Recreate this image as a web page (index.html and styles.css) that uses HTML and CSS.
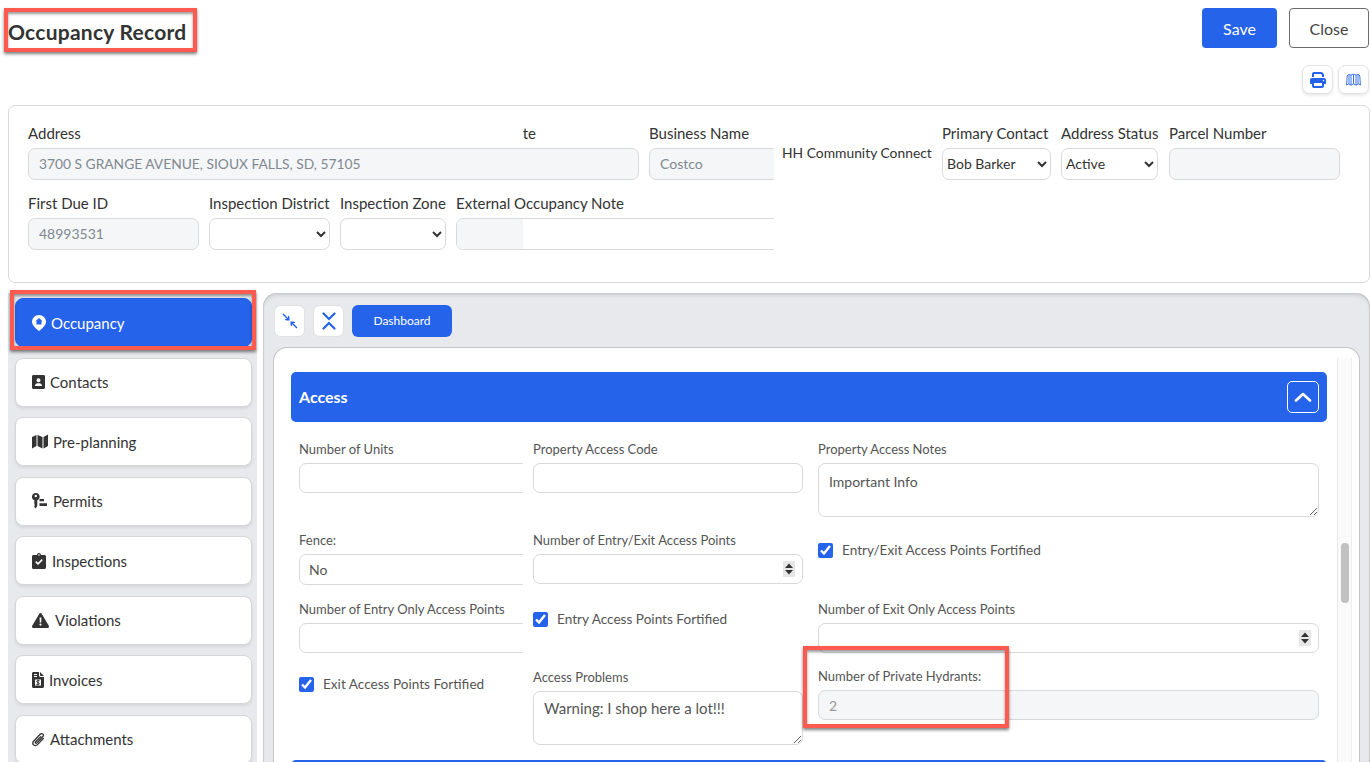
FILE: index.html
```html
<!DOCTYPE html>
<html lang="en">
<head>
  <meta charset="UTF-8">
  <meta name="viewport" content="width=device-width, initial-scale=1.0">
  <title>Occupancy Record</title>
  <link rel="stylesheet" href="styles.css">
</head>
<body>
  <header class="page-header">
    <h1>Occupancy Record</h1>
    <div class="header-actions">
      <button class="btn btn-save">Save</button>
      <button class="btn btn-close">Close</button>
    </div>
  </header>

  <div class="tool-row">
    <button class="tool-button" aria-label="Print">
      <svg width="16" height="16" viewBox="0 0 512 512" fill="#2563eb"><path d="M128 0C93 0 64 29 64 64v96h64V64h227l29 29v67h64V93c0-17-7-33-19-45L403 19C391 7 375 0 358 0H128zM384 352v96H128v-96h256zm64 32h32c18 0 32-14 32-32v-96c0-35-29-64-64-64H64c-35 0-64 29-64 64v96c0 18 14 32 32 32h32v64c0 35 29 64 64 64h256c35 0 64-29 64-64v-64zM432 248a24 24 0 1 1 0 48 24 24 0 1 1 0-48z"/></svg>
    </button>
    <button class="tool-button" aria-label="Map">
      <svg width="15" height="13" viewBox="0 0 15 13" fill="none" stroke="#2563eb" stroke-width=".9" stroke-linejoin="round"><path d="M.6 12 1.200 3C1.600 1.500 3.500.9 5 2.200 6.500.9 8.500.9 10 2.200 11.500.9 13.400 1.500 13.800 3L14.400 12 12.500 10.800 10 12.200 7.500 10.800 5 12.200 2.500 10.800z"/><path d="M5 2.200V12.200M10 2.200V12.200M3 2V10.800M7.500 1.500V10.800M12 2V10.800"/></svg>
    </button>
  </div>

  <section class="summary-card">
    <div class="summary-row">
      <div class="field field-address">
        <div class="label-row"><label>Address</label><label class="label-stub">te</label></div>
        <input type="text" value="3700 S GRANGE AVENUE, SIOUX FALLS, SD, 57105" disabled>
      </div>
      <div class="field field-business">
        <label>Business Name</label>
        <input type="text" value="Costco" disabled>
      </div>
      <div class="community">HH Community Connect</div>
      <div class="field field-contact">
        <label>Primary Contact</label>
        <select><option>Bob Barker</option></select>
      </div>
      <div class="field field-status">
        <label>Address Status</label>
        <select><option>Active</option></select>
      </div>
      <div class="field field-parcel">
        <label>Parcel Number</label>
        <input type="text" disabled>
      </div>
    </div>
    <div class="summary-row">
      <div class="field field-due">
        <label>First Due ID</label>
        <input type="text" value="48993531" disabled>
      </div>
      <div class="field field-district">
        <label>Inspection District</label>
        <select><option></option></select>
      </div>
      <div class="field field-zone">
        <label>Inspection Zone</label>
        <select><option></option></select>
      </div>
      <div class="field field-note">
        <label>External Occupancy Note</label>
        <div class="note-box"><span class="note-disabled"></span></div>
      </div>
    </div>
  </section>

  <div class="workspace">
    <nav class="side-nav">
      <a class="nav-item active">
        <svg class="nav-icon" width="14" height="16" viewBox="0 0 14 16"><path fill="#fff" d="M7 0C3.100 0 0 3 0 6.800 0 10.500 4.500 14.300 7 16c2.500-1.700 7-5.500 7-9.200C14 3 10.900 0 7 0z"/><path fill="#2563eb" d="M7 3 3.500 6.300h1V9.500h5V6.300h1z"/></svg>
        <span>Occupancy</span>
      </a>
      <a class="nav-item">
        <svg class="nav-icon" width="13" height="14" viewBox="0 0 13 14"><path fill="#333" fill-rule="evenodd" d="M1.500 0h10C12.300 0 13 .7 13 1.500v11c0 .8-.7 1.500-1.500 1.500h-10C.7 14 0 13.300 0 12.500v-11C0 .7.700 0 1.500 0zM6.500 3.200a2 2 0 1 0 0 4 2 2 0 0 0 0-4zM3 11h7c0-1.700-1.200-2.800-2.500-2.800h-2C4.200 8.200 3 9.300 3 11z"/></svg>
        <span>Contacts</span>
      </a>
      <a class="nav-item">
        <svg class="nav-icon" width="16" height="15" viewBox="0 0 16 15"><path fill="#333" d="M0 3 4.500 1v11L0 14.500zM5.500 1l5 2v11.500l-5-2.500zM11.500 3 16 .5V12l-4.500 2.500z"/></svg>
        <span>Pre-planning</span>
      </a>
      <a class="nav-item nav-item-loose">
        <svg class="nav-icon" width="15" height="16" viewBox="0 0 15 16"><path fill="#333" fill-rule="evenodd" d="M3.800 0a3.800 3.800 0 0 1 1.500 7.300V12.500L3.800 15.500 2.300 14v-1.200l.8-.8-.8-.8V7.300A3.800 3.800 0 0 1 3.800 0zm0 1.800a1.200 1.200 0 1 0 0 2.400 1.200 1.200 0 0 0 0-2.400zM7.500 6h4.500v2.300H7.500zM7.500 10.300H15v2.700H7.500z"/></svg>
        <span>Permits</span>
      </a>
      <a class="nav-item nav-item-loose">
        <svg class="nav-icon" width="14" height="16" viewBox="0 0 14 16"><path fill="#333" fill-rule="evenodd" d="M5 2a2 2 0 0 1 4 0h3.500C13.300 2 14 2.700 14 3.500v11c0 .8-.7 1.500-1.500 1.500h-11C.7 16 0 15.300 0 14.500v-11C0 2.700.7 2 1.500 2zM7 1.200a.8.8 0 1 0 0 1.600.8.8 0 0 0 0-1.600zM10.800 7.200 9.700 6.100 6 9.800 4.300 8.100 3.200 9.200 6 12z"/></svg>
        <span>Inspections</span>
      </a>
      <a class="nav-item nav-item-loose">
        <svg class="nav-icon" width="17" height="15" viewBox="0 0 17 15"><path fill="#333" fill-rule="evenodd" d="M8.500 0c.5 0 .9.300 1.200.7l7.100 12c.5.900-.1 2.300-1.200 2.300H1.400C.3 15-.3 13.600.2 12.700l7.100-12C7.600.3 8 0 8.500 0zM7.600 4.500l.2 5h1.400l.2-5zM8.500 10.500a1.100 1.100 0 1 0 0 2.200 1.100 1.100 0 0 0 0-2.200z"/></svg>
        <span>Violations</span>
      </a>
      <a class="nav-item">
        <svg class="nav-icon" width="12" height="16" viewBox="0 0 12 16"><path fill="#333" d="M8 0l4 4H9a1 1 0 0 1-1-1z"/><path fill="#333" fill-rule="evenodd" d="M1.500 0H7v3.500C7 4.300 7.700 5 8.500 5H12v9.500c0 .8-.7 1.500-1.500 1.500h-9C.7 16 0 15.300 0 14.500v-13C0 .7.700 0 1.500 0zM2 2v1h3V2zM2 4v1h3V4zM3 7.500v6h6v-6z"/><path fill="none" stroke="#333" stroke-width="1" d="M7.500 8.700C7 8.300 4.600 8.300 4.600 9.500s2.800.9 2.800 2.100-2.400 1.200-3 .7M6 7.800v5.400"/></svg>
        <span>Invoices</span>
      </a>
      <a class="nav-item">
        <svg class="nav-icon" width="13" height="15" viewBox="0 0 13 15" fill="none" stroke="#333" stroke-width="1.300" stroke-linecap="round"><path d="M11.300 6.500 5.500 12.600c-1.100 1.200-2.900 1.300-3.900.3-1-1-.9-2.700.2-3.900L8.200 2.300c.8-.8 2-.9 2.700-.2.700.7.6 1.900-.2 2.700L4.900 10.900c-.4.400-1 .5-1.300.2-.3-.3-.3-.9.100-1.300L8.800 4.600"/></svg>
        <span>Attachments</span>
      </a>
    </nav>

    <main class="main-panel">
      <div class="panel-toolbar">
        <button class="square-button" aria-label="Collapse">
          <svg width="16" height="16" viewBox="0 0 16 16" fill="#2563eb"><path d="M1.500.5 6 5V2.500L7.500 4v3.500H4L2.500 6H5L.5 1.500zM14.500 15.500 10 11v2.500L8.500 12V8.500H12L13.500 10H11l4.500 4.500z"/></svg>
        </button>
        <button class="square-button" aria-label="Collapse all">
          <svg width="14" height="18" viewBox="0 0 14 18" fill="none" stroke="#2563eb" stroke-width="2.200" stroke-linecap="round"><path d="M1.500 1.500 7 7l5.500-5.500M1.500 16.500 7 11l5.500 5.500"/></svg>
        </button>
        <button class="btn-dashboard">Dashboard</button>
      </div>

      <div class="form-card">
        <div class="section-bar">
          <span>Access</span>
          <button class="section-toggle" aria-label="Collapse section">
            <svg width="18" height="10" viewBox="0 0 18 10" fill="none" stroke="#fff" stroke-width="2.600" stroke-linecap="round" stroke-linejoin="round"><path d="M2 8.500 9 2l7 6.500"/></svg>
          </button>
        </div>

        <div class="form-grid">
          <div class="form-field clipped">
            <label>Number of Units</label>
            <input type="text">
          </div>
          <div class="form-field">
            <label>Property Access Code</label>
            <input type="text">
          </div>
          <div class="form-field">
            <label>Property Access Notes</label>
            <textarea class="notes-area">Important Info</textarea>
          </div>

          <div class="form-field clipped">
            <label>Fence:</label>
            <input class="tall" type="text" value="No">
          </div>
          <div class="form-field">
            <label>Number of Entry/Exit Access Points</label>
            <input type="number">
          </div>
          <label class="check-field"><input type="checkbox" checked> Entry/Exit Access Points Fortified</label>

          <div class="form-field clipped">
            <label>Number of Entry Only Access Points</label>
            <input type="text">
          </div>
          <label class="check-field"><input type="checkbox" checked> Entry Access Points Fortified</label>
          <div class="form-field">
            <label>Number of Exit Only Access Points</label>
            <input type="number">
          </div>

          <label class="check-field check-low"><input type="checkbox" checked> Exit Access Points Fortified</label>
          <div class="form-field">
            <label>Access Problems</label>
            <textarea class="notes-area notes-large">Warning: I shop here a lot!!!</textarea>
          </div>
          <div class="form-field hydrants">
            <label>Number of Private Hydrants:</label>
            <input type="text" value="2" disabled>
          </div>
        </div>

        <div class="section-bar next-bar"></div>
        <div class="scroll-track"><div class="scroll-thumb"></div></div>
      </div>
    </main>
  </div>

  <!-- red callouts -->
  <div class="callout callout-title"></div>
  <div class="callout callout-nav"></div>
  <div class="callout callout-hydrants"></div>
</body>
</html>
```

FILE: styles.css
```css
* {
  box-sizing: border-box;
}

html,
body {
  height: 762px;
  overflow: hidden;
}

body {
  position: relative;
  font-family: Lato, "Open Sans", Arial, sans-serif;
  margin: 0;
  padding: 0 1px 0 8px;
  background: #fff;
  color: #333;
}

button {
  font-family: inherit;
  cursor: pointer;
}

.page-header {
  display: flex;
  justify-content: space-between;
  align-items: center;
  padding-top: 8px;
  height: 48px;
}

.page-header h1 {
  margin: 6px 0 0;
  font-size: 21px;
  letter-spacing: 0.25px;
  font-weight: 700;
  color: #333;
}

.header-actions {
  display: flex;
  gap: 12px;
  margin-right: 1px;
}

.btn {
  height: 40px;
  font-size: 16px;
  border-radius: 4px;
}

.btn-save {
  width: 75px;
  background: #2563eb;
  border: none;
  color: #fff;
}

.btn-close {
  width: 80px;
  background: #fff;
  border: 1px solid #6b6b6b;
  color: #444;
}

.tool-row {
  display: flex;
  justify-content: flex-end;
  gap: 5px;
  margin-top: 17px;
  margin-right: 1px;
}

.tool-button {
  display: flex;
  align-items: center;
  justify-content: center;
  width: 31px;
  height: 29px;
  padding: 0;
  background: #fff;
  border: 1px solid #e2e2e2;
  border-radius: 7px;
  box-shadow: 0 2px 3px rgba(0, 0, 0, 0.08);
}

.summary-card {
  height: 178px;
  margin-top: 11px;
  padding: 18px 19px 0;
  border: 1px solid #d9d9d9;
  border-radius: 7px;
}

.summary-row {
  display: flex;
  gap: 10px;
  height: 70px;
}

.field {
  display: flex;
  flex-direction: column;
  flex: none;
}

.field label {
  display: block;
  font-size: 15px;
  line-height: 18px;
  margin-bottom: 6px;
  white-space: nowrap;
}

.label-row {
  display: flex;
  justify-content: space-between;
  padding-right: 103px;
}

.field input,
.field select {
  height: 32px;
  padding: 0 10px 2px;
  font-family: inherit;
  font-size: 14px;
  background: #fff;
  color: #333;
  border: 1px solid #d9d9d9;
  border-radius: 7px;
}

.field select {
  padding: 0 0 2px;
}

.field input:disabled {
  background: #f5f6f8;
  color: #808890;
}

.field-address { width: 611px; }
.field-address input { font-size: 13.800px; }
.field-business { width: 125px; overflow: hidden; }
.field-business input { width: 150px; }
.field-contact { width: 109px; }
.field-status { width: 97px; }
.field-parcel { width: 171px; margin-left: 1px; }
.field-due { width: 171px; }
.field-district { width: 121px; }
.field-zone { width: 106px; }
.field-note { width: 318px; overflow: hidden; }

.community {
  flex: none;
  width: 150px;
  margin-left: -2px;
  padding-top: 21px;
  font-size: 13.850px;
  line-height: 15px;
  white-space: nowrap;
}

.note-box {
  width: 340px;
  height: 32px;
  background: #fff;
  border: 1px solid #d9d9d9;
  border-radius: 7px;
  overflow: hidden;
}

.note-disabled {
  display: block;
  width: 66px;
  height: 100%;
  background: #f5f6f8;
}

.workspace {
  display: flex;
  gap: 6px;
  height: 469px;
  margin-top: 10px;
}

.side-nav {
  display: flex;
  flex-direction: column;
  gap: 10.500px;
  flex: none;
  width: 249px;
  padding: 5px 5px 0 7px;
  background: #e8e9ed;
  overflow: hidden;
}

.nav-item {
  display: flex;
  align-items: center;
  flex: none;
  gap: 5px;
  height: 49px;
  padding-left: 16px;
  background: #fff;
  border: 1px solid #d6d6d8;
  border-radius: 8px;
  box-shadow: 0 2px 3px rgba(0, 0, 0, 0.08);
  font-size: 15px;
  color: #333;
}

.nav-item-loose {
  gap: 6px;
}

.nav-item.active {
  background: #2563eb;
  border-color: #2563eb;
  color: #fff;
}

.nav-icon {
  flex: none;
}

.main-panel {
  flex: 1;
  min-width: 0;
  padding: 12px 10px 0;
  background: #e8e9ed;
  border-radius: 14px 14px 0 0;
  box-shadow: inset 0 4px 4px -2px rgba(0, 0, 0, 0.14), inset 1px 0 1px rgba(0, 0, 0, 0.12), inset -1px 0 1px rgba(0, 0, 0, 0.12);
}

.panel-toolbar {
  display: flex;
  align-items: center;
  gap: 8px;
  height: 32px;
  padding-left: 1px;
}

.square-button {
  display: flex;
  align-items: center;
  justify-content: center;
  width: 31px;
  height: 32px;
  padding: 0;
  background: #fff;
  border: 1px solid #e2e2e2;
  border-radius: 7px;
}

.btn-dashboard {
  width: 100px;
  height: 32px;
  padding-bottom: 2px;
  background: #2563eb;
  border: none;
  border-radius: 6px;
  color: #fff;
  font-size: 12px;
}

.form-card {
  position: relative;
  height: 430px;
  margin-top: 10px;
  padding: 24px 32px 0 17px;
  background: #fff;
  border: 1px solid #c4c4c6;
  border-bottom: none;
  border-radius: 14px 14px 0 0;
}

.section-bar {
  display: flex;
  justify-content: space-between;
  align-items: center;
  height: 50px;
  padding: 0 8px;
  background: #2563eb;
  border-radius: 5px;
  color: #fff;
  font-size: 16px;
  font-weight: 700;
}

.section-bar span {
  margin-bottom: 2px;
}

.section-toggle {
  display: flex;
  align-items: center;
  justify-content: center;
  width: 32px;
  height: 32px;
  padding: 0;
  background: transparent;
  border: 1px solid #fff;
  border-radius: 5px;
}

.form-grid {
  display: grid;
  grid-template-columns: 224px 270px 1fr;
  grid-template-rows: 74px auto auto auto;
  column-gap: 10px;
  row-gap: 17px;
  margin-top: 20px;
  padding: 0 8px;
}

.form-grid > :nth-child(3n) {
  margin-left: 5px;
}

.form-field {
  display: flex;
  flex-direction: column;
  min-width: 0;
}

.form-field label {
  font-size: 13px;
  line-height: 15px;
  margin-bottom: 6px;
  color: #555;
  white-space: nowrap;
}

.form-field input,
.form-field textarea {
  width: 100%;
  height: 30px;
  padding: 0 10px;
  font-family: inherit;
  font-size: 14px;
  background: #fff;
  color: #555;
  border: 1px solid #d9d9d9;
  border-radius: 7px;
  flex: none;
}

/* grey spinner block, always visible */
.form-field input[type="number"]::-webkit-inner-spin-button {
  -webkit-appearance: none;
  opacity: 1;
  width: 12px;
  height: 16px;
  margin-right: -3px;
  background: #e6e6e6 url("data:image/svg+xml,%3Csvg xmlns='http://www.w3.org/2000/svg' width='12' height='16'%3E%3Cpath fill='%23333' d='M6 2.500 10 7H2zM6 13.500 2 9h8z'/%3E%3C/svg%3E") center no-repeat;
}

.form-field input:disabled {
  background: #f5f6f8;
  color: #999;
}

.form-field textarea.notes-area {
  display: block;
  height: 54px;
  padding: 9px 10px;
  line-height: 17px;
}

.form-field textarea.notes-large {
  padding-top: 8px;
  font-size: 15px;
}

.clipped {
  overflow: hidden;
}

.clipped input {
  width: 260px;
}

.clipped input.tall {
  height: 31px;
  padding-left: 9px;
}

.check-field {
  display: flex;
  align-items: flex-start;
  gap: 9px;
  padding-top: 10px;
  font-size: 13.600px;
  line-height: 15px;
  color: #555;
  white-space: nowrap;
}

.check-field input {
  width: 15px;
  height: 15px;
  margin: 0;
  accent-color: #2563eb;
}

.check-low {
  padding-top: 7px;
}

.hydrants {
  margin-top: -1px;
}

.next-bar {
  height: 20px;
  margin-top: 15px;
}

.scroll-track {
  position: absolute;
  top: 10px;
  right: 7px;
  width: 15px;
  height: 420px;
  background: #fafafa;
  border-left: 1px solid #e8e8e8;
  border-right: 1px solid #eee;
}

.scroll-thumb {
  width: 8px;
  height: 60px;
  margin: 185px 0 0 3px;
  background: #c1c1c1;
  border-radius: 4px;
}

.callout {
  position: absolute;
  border: 4px solid #ff5a4f;
  box-shadow: 0 2px 3px rgba(0, 0, 0, 0.5), inset 0 2px 3px rgba(0, 0, 0, 0.4);
  pointer-events: none;
}

.callout-title {
  left: 4px;
  top: 8px;
  width: 193px;
  height: 44px;
}

.callout-nav {
  left: 10px;
  top: 290px;
  width: 246px;
  height: 60px;
}

.callout-hydrants {
  left: 803px;
  top: 646px;
  width: 206px;
  height: 82px;
}
```
